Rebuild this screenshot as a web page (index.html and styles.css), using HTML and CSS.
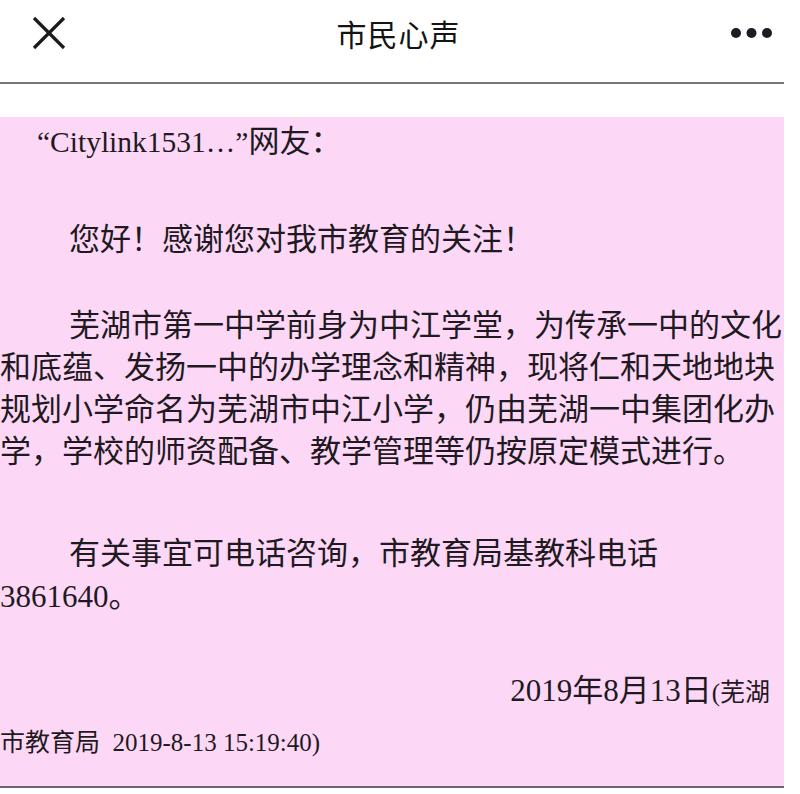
FILE: index.html
```html
<!DOCTYPE html>
<html lang="zh-CN">
<head>
<meta charset="utf-8">
<title>市民心声</title>
<link rel="stylesheet" href="styles.css">
</head>
<body>
<div class="page">
  <header class="topbar">
    <svg class="icon-close" width="34" height="34" viewBox="0 0 34 34" aria-hidden="true">
      <line x1="2" y1="2" x2="32" y2="32"/>
      <line x1="32" y1="2" x2="2" y2="32"/>
    </svg>
    <h1 class="title">市民心声</h1>
    <svg class="icon-more" width="41" height="10" viewBox="0 0 41 10" aria-hidden="true">
      <circle cx="5" cy="5" r="5"/>
      <circle cx="20.5" cy="5" r="5"/>
      <circle cx="36" cy="5" r="5"/>
    </svg>
  </header>

  <main class="reply">
    <p class="salute"><span class="latin">“Citylink1531…”</span>网友：</p>
    <p class="greet">您好！感谢您对我市教育的关注！</p>
    <p class="para para-main">芜湖市第一中学前身为中江学堂，为传承一中的文化和底蕴、发扬一中的办学理念和精神，现将仁和天地地块规划小学命名为芜湖市中江小学，仍由芜湖一中集团化办学，学校的师资配备、教学管理等仍按原定模式进行。</p>
    <p class="para para-contact">有关事宜可电话咨询，市教育局基教科电话3861640。</p>
    <p class="sign-date">2019年8月13日<span class="small">(芜湖</span></p>
    <p class="sign-source">市教育局&nbsp; 2019-8-13 15:19:40)</p>
  </main>
</div>
</body>
</html>
```

FILE: styles.css
```css
html, body {
  margin: 0;
  padding: 0;
  background: #ffffff;
}

.page {
  width: 784px;
}

.topbar {
  box-sizing: border-box;
  height: 84px;
  padding: 0 12px 16px 32px;
  display: flex;
  align-items: center;
  justify-content: space-between;
  border-bottom: 2px solid #767676;
}

.icon-close line {
  stroke: #1a1a1e;
  stroke-width: 3.2;
}

.icon-more circle {
  fill: #1c1c24;
}

.title {
  margin: 0;
  font-family: "Noto Sans CJK SC", sans-serif;
  font-size: 30px;
  font-weight: 400;
  letter-spacing: 1px;
  color: #141414;
  line-height: 40px;
}

.reply {
  margin-top: 33px;
  background: #fcd8f6;
  padding: 3px 0 18px 0;
  border-bottom: 2px solid #6b6571;
  font-family: "Liberation Serif", "Noto Sans CJK SC", serif;
  font-size: 31px;
  line-height: 43px;
  color: #1f1a22;
}

.reply p {
  margin: 0;
}

.salute {
  text-indent: 37px;
}

.latin {
  font-size: 29.5px;
}

.reply .greet {
  margin-top: 54px;
  text-indent: 69px;
}

.para {
  text-indent: 69px;
}

.reply .para-main {
  margin-top: 44px;
  line-height: 42px;
}

.reply .para-contact {
  margin-top: 59px;
}

.reply .sign-date {
  margin-top: 48px;
  line-height: 50px;
  text-align: right;
  padding-right: 14px;
}

.small {
  font-size: 25px;
}

.sign-source {
  font-size: 25px;
  line-height: 50px;
}
```
